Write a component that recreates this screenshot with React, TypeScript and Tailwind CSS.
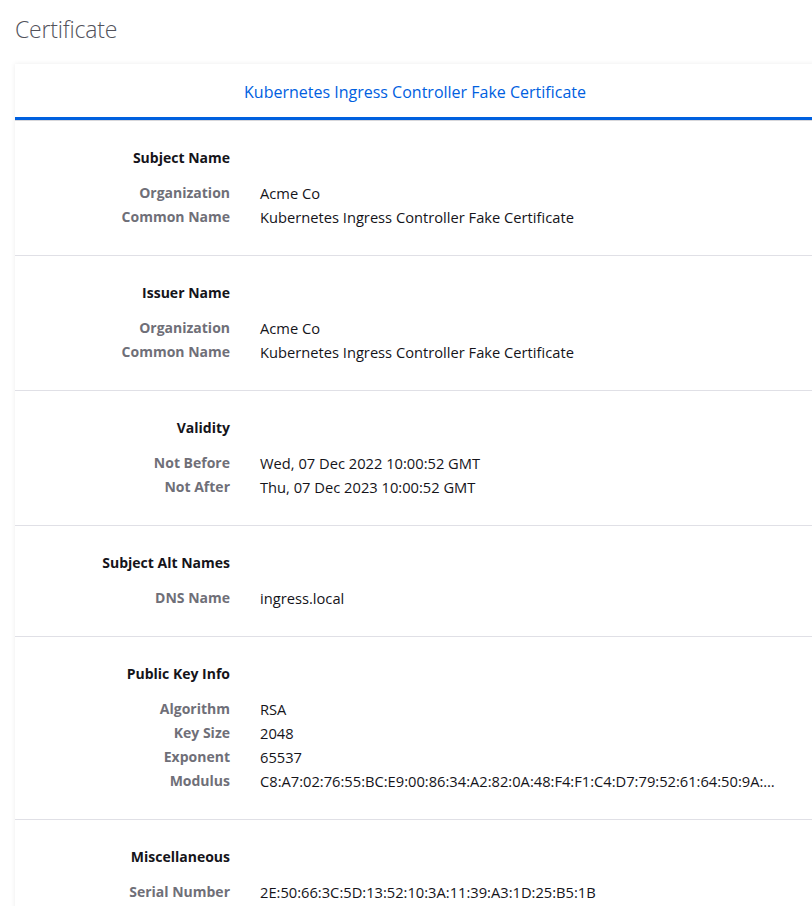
import React from "react";

type Row = [string, string];
type Section = { title: string; rows: Row[] };

const sections: Section[] = [
  {
    title: "Subject Name",
    rows: [
      ["Organization", "Acme Co"],
      ["Common Name", "Kubernetes Ingress Controller Fake Certificate"],
    ],
  },
  {
    title: "Issuer Name",
    rows: [
      ["Organization", "Acme Co"],
      ["Common Name", "Kubernetes Ingress Controller Fake Certificate"],
    ],
  },
  {
    title: "Validity",
    rows: [
      ["Not Before", "Wed, 07 Dec 2022 10:00:52 GMT"],
      ["Not After", "Thu, 07 Dec 2023 10:00:52 GMT"],
    ],
  },
  {
    title: "Subject Alt Names",
    rows: [["DNS Name", "ingress.local"]],
  },
  {
    title: "Public Key Info",
    rows: [
      ["Algorithm", "RSA"],
      ["Key Size", "2048"],
      ["Exponent", "65537"],
      ["Modulus", "C8:A7:02:76:55:BC:E9:00:86:34:A2:82:0A:48:F4:F1:C4:D7:79:52:61:64:50:9A:…"],
    ],
  },
  {
    title: "Miscellaneous",
    rows: [["Serial Number", "2E:50:66:3C:5D:13:52:10:3A:11:39:A3:1D:25:B5:1B"]],
  },
];

export default function App() {
  return (
    <div
      className="w-[812px] h-[906px] overflow-hidden bg-white"
      style={{ fontFamily: '"Open Sans", "Noto Sans", sans-serif' }}
    >
      <h1 className="pl-[15px] pt-[14px] h-[64px] text-[23px] font-light text-[#52525b] leading-[30px] tracking-[-0.2px]">
        Certificate
      </h1>
      <div className="ml-[15px] w-[800px] bg-white shadow-[0_0_5px_rgba(0,0,0,0.08)]">
        <div className="h-[53px] flex items-center justify-center pt-[2px] text-[16px] text-[#0060df]">
          Kubernetes Ingress Controller Fake Certificate
        </div>
        <div className="h-[3px] bg-[#0060df]" />
        <div className="h-px bg-[#d7d7db]" />
        {sections.map((s, i) => (
          <div
            key={s.title}
            className={
              "pt-[25px] pb-[26px] " + (i < sections.length - 1 ? "border-b border-[#e0e0e6]" : "")
            }
          >
            <div className="grid grid-cols-[215px_1fr] gap-x-[30px] text-[14px] leading-[24px]">
              <div className="text-right font-bold text-[#15141a] mb-[11px]">{s.title}</div>
              <div />
              {s.rows.map(([k, v]) => (
                <React.Fragment key={k}>
                  <div className="text-right font-bold text-[#6f6f78]">{k}</div>
                  <div className="text-[#15141a] text-[14.7px] whitespace-nowrap">{v}</div>
                </React.Fragment>
              ))}
            </div>
          </div>
        ))}
      </div>
    </div>
  );
}
